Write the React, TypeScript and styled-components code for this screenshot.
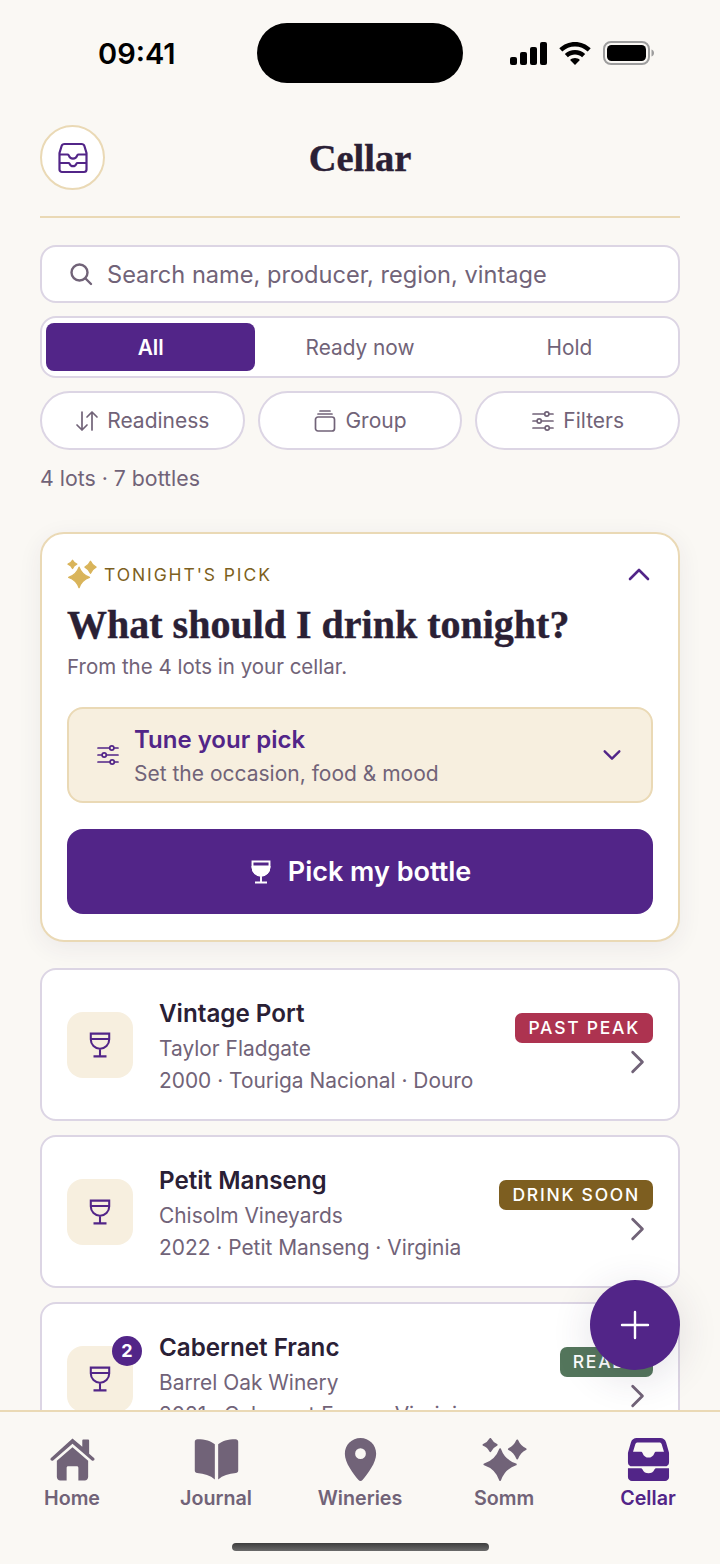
import React from 'react';
import styled, { createGlobalStyle } from 'styled-components';

const purple = '#522588';
const ink = '#2a2035';
const muted = '#716378';
const cream = '#f7efdf';
const gold = '#ead9b5';
const lilac = '#dcd5e4';
const paper = '#faf8f4';

const GlobalStyle = createGlobalStyle`
  html, body {
    margin: 0;
    padding: 0;
    background: ${paper};
  }
  * {
    box-sizing: border-box;
  }
`;

const Screen = styled.div`
  position: relative;
  width: 720px;
  height: 1564px;
  display: flex;
  flex-direction: column;
  overflow: hidden;
  background: ${paper};
  color: ${ink};
  font-family: Inter, 'Liberation Sans', sans-serif;
`;

const Scroller = styled.main`
  flex: 1;
  min-height: 0;
  overflow: hidden;
`;

const StatusBar = styled.div`
  height: 106px;
  padding: 23px 66px 0 98px;
  display: grid;
  grid-template-columns: 159px 206px 1fr;
  align-items: start;
`;

const Clock = styled.span`
  height: 60px;
  display: flex;
  align-items: center;
  font-size: 29px;
  font-weight: 600;
  color: #000;
`;

const Island = styled.div`
  height: 60px;
  border-radius: 30px;
  background: #000;
`;

const StatusIcons = styled.div`
  height: 60px;
  display: flex;
  align-items: center;
  justify-content: flex-end;
  gap: 12px;
`;

const Header = styled.header`
  margin: 0 40px;
  padding: 19px 0 26px;
  display: grid;
  grid-template-columns: 65px 1fr 65px;
  align-items: center;
  border-bottom: 2px solid ${gold};
`;

const RoundButton = styled.button`
  width: 65px;
  height: 65px;
  padding: 0;
  display: grid;
  place-items: center;
  border-radius: 50%;
  border: 2px solid ${gold};
  background: #fff;
  color: ${purple};
`;

const serif = `'Liberation Serif', 'Times New Roman', serif`;

const PageTitle = styled.h1`
  margin: 0;
  text-align: center;
  font-family: ${serif};
  font-size: 38.5px;
  line-height: 44px;
  font-weight: 700;
  -webkit-text-stroke: 0.4px ${ink};
  color: ${ink};
`;

const Controls = styled.section`
  margin: 27px 40px 0;
  display: flex;
  flex-direction: column;
  gap: 13px;
`;

const SearchBox = styled.div`
  height: 58px;
  padding: 0 27px;
  display: flex;
  align-items: center;
  gap: 14px;
  background: #fff;
  border: 2px solid ${lilac};
  border-radius: 16px;
  color: ${muted};
  font-size: 23.6px;
`;

const Segments = styled.div`
  height: 62px;
  padding: 5px 4px;
  display: grid;
  grid-template-columns: repeat(3, 1fr);
  background: #fff;
  border: 2px solid ${lilac};
  border-radius: 16px;
`;

const Segment = styled.div<{ $active?: boolean }>`
  display: grid;
  place-items: center;
  border-radius: 8px;
  font-size: 20.8px;
  font-weight: ${(p) => (p.$active ? 600 : 400)};
  color: ${(p) => (p.$active ? '#fff' : muted)};
  background: ${(p) => (p.$active ? purple : 'transparent')};
`;

const Chips = styled.div`
  display: grid;
  grid-template-columns: repeat(3, 1fr);
  gap: 13px;
`;

const Chip = styled.div`
  height: 59px;
  display: flex;
  align-items: center;
  justify-content: center;
  gap: 8px;
  background: #fff;
  border: 2px solid ${lilac};
  border-radius: 30px;
  color: ${muted};
  font-size: 21px;
`;

const Count = styled.p`
  margin: 0;
  padding-top: 1px;
  font-size: 21.3px;
  line-height: 28px;
  color: ${muted};
`;

const PickCard = styled.section`
  margin: 40px 40px 0;
  padding: 25px 25px 26px;
  background: #fff;
  border: 2px solid ${gold};
  border-radius: 24px;
  box-shadow: 0 6px 24px rgba(60, 40, 80, 0.07);
`;

const PickTop = styled.div`
  height: 30px;
  display: flex;
  align-items: center;
  gap: 7px;
  color: #7d5f20;
  font-size: 17.5px;
  letter-spacing: 1.9px;
`;

const SparkleMark = styled.span`
  display: flex;
  color: #d9b45a;
`;

const PickToggle = styled.span`
  margin-left: auto;
  margin-right: 2px;
  display: flex;
  color: ${purple};
`;

const PickTitle = styled.h2`
  margin: 14px 0 0;
  font-family: ${serif};
  font-size: 40px;
  line-height: 44px;
  font-weight: 700;
  -webkit-text-stroke: 0.4px ${ink};
  color: ${ink};
`;

const PickNote = styled.p`
  margin: 6px 0 0;
  font-size: 20.5px;
  line-height: 28px;
  color: ${muted};
`;

const TuneBox = styled.div`
  margin-top: 26px;
  height: 96px;
  padding: 0 28px 0 27px;
  display: flex;
  align-items: center;
  gap: 14px;
  background: ${cream};
  border: 2px solid ${gold};
  border-radius: 16px;
  color: ${purple};
`;

const TuneCopy = styled.div`
  flex: 1;
  padding-top: 1px;
  display: flex;
  flex-direction: column;
  gap: 4px;
`;

const TuneTitle = styled.span`
  font-size: 24px;
  line-height: 32px;
  font-weight: 600;
  color: ${purple};
`;

const TuneNote = styled.span`
  font-size: 21px;
  line-height: 28px;
  color: ${muted};
`;

const PickButton = styled.button`
  margin-top: 26px;
  width: 100%;
  height: 85px;
  display: flex;
  align-items: center;
  justify-content: center;
  gap: 15px;
  border: 0;
  border-radius: 16px;
  background: ${purple};
  color: #fff;
  font-family: inherit;
  font-size: 27px;
  font-weight: 600;
`;

const Lots = styled.div`
  margin: 26px 40px 0;
  display: flex;
  flex-direction: column;
  gap: 14px;
`;

const LotCard = styled.article`
  flex: none;
  height: 153px;
  padding: 0 25px;
  display: grid;
  grid-template-columns: 66px 1fr auto;
  column-gap: 26px;
  align-items: center;
  background: #fff;
  border: 2px solid ${lilac};
  border-radius: 16px;
`;

const Thumb = styled.div`
  position: relative;
  width: 66px;
  height: 66px;
  display: grid;
  place-items: center;
  border-radius: 16px;
  background: ${cream};
  color: ${purple};
`;

const QtyBadge = styled.span`
  position: absolute;
  top: -10px;
  right: -9px;
  width: 30px;
  height: 30px;
  display: grid;
  place-items: center;
  border-radius: 50%;
  background: ${purple};
  color: #fff;
  font-size: 18px;
  font-weight: 700;
`;

const LotCopy = styled.div`
  padding-top: 3px;
  display: flex;
  flex-direction: column;
`;

const LotName = styled.span`
  font-size: 24.2px;
  line-height: 32px;
  font-weight: 600;
  color: ${ink};
`;

const LotLine = styled.span<{ $gap: number }>`
  margin-top: ${(p) => p.$gap}px;
  font-size: 20.9px;
  line-height: 28px;
  color: ${muted};
`;

const LotSide = styled.div`
  align-self: center;
  margin-top: -2px;
  display: flex;
  flex-direction: column;
  align-items: flex-end;
  gap: 6px;
  color: ${muted};

  > svg {
    margin-right: 3px;
  }
`;

const Pill = styled.span<{ $tone: string }>`
  height: 30px;
  padding: 0 13px;
  display: flex;
  align-items: center;
  border-radius: 7px;
  background: ${(p) => p.$tone};
  color: #fff;
  font-size: 17.5px;
  font-weight: 500;
  letter-spacing: 1.75px;
  white-space: nowrap;
`;

const Fab = styled.button`
  position: absolute;
  left: 590px;
  top: 1280px;
  width: 90px;
  height: 90px;
  padding: 0;
  display: grid;
  place-items: center;
  border: 0;
  border-radius: 50%;
  background: ${purple};
  color: #fff;
  box-shadow: 0 8px 40px rgba(60, 40, 80, 0.14);
`;

const TabBar = styled.nav`
  position: relative;
  flex: none;
  height: 154px;
  padding-top: 25px;
  display: grid;
  grid-template-columns: repeat(5, 1fr);
  align-items: start;
  background: ${paper};
  border-top: 2px solid ${gold};
`;

const Tab = styled.div<{ $active?: boolean }>`
  display: flex;
  flex-direction: column;
  align-items: center;
  gap: 3px;
  font-size: 19.7px;
  line-height: 26px;
  font-weight: 600;
  color: ${(p) => (p.$active ? purple : muted)};
`;

const TabIcon = styled.svg`
  display: block;
  width: 45px;
  height: 45px;
  fill: currentColor;
`;

const HomeIndicator = styled.span`
  position: absolute;
  left: 232px;
  bottom: 13px;
  width: 257px;
  height: 8px;
  border-radius: 4px;
  background: linear-gradient(#3d3d3d, #6a6a6a);
`;

function Glass({ size = 26, tone = 'outline' }: { size?: number; tone?: 'outline' | 'solid' }) {
  return (
    <svg width={size} height={size} viewBox="0 0 24 24" fill="none" stroke="currentColor" strokeWidth="1.9">
      {tone === 'solid' && <path d="M3.500 7h17a8.500 8.500 0 0 1-17 0z" fill="currentColor" />}
      <path d="M3.500 1.500h17V7a8.500 8.500 0 0 1-17 0zM3.500 6.500h17M12 15.500v7M6 22.500h12" />
    </svg>
  );
}

function Sliders({ size = 24 }: { size?: number }) {
  return (
    <svg width={size} height={size} viewBox="0 0 24 24" fill="none" stroke="currentColor" strokeWidth="1.7" strokeLinecap="round">
      <path d="M2 5h11.500M18 5h4M2 12h4M10.500 12H22M2 19h12M18.500 19H22" />
      <circle cx="15.800" cy="5" r="2.100" />
      <circle cx="8.200" cy="12" r="2.100" />
      <circle cx="16.200" cy="19" r="2.100" />
    </svg>
  );
}

function Chevron({ dir, size = 24 }: { dir: 'up' | 'down' | 'right'; size?: number }) {
  const d = { up: 'M3 17 12 8l9 9', down: 'M4 8l8 8 8-8', right: 'M8 3l9 9-9 9' }[dir];
  return (
    <svg width={size} height={size} viewBox="0 0 24 24" fill="none" stroke="currentColor" strokeWidth="2.6" strokeLinecap="round" strokeLinejoin="round">
      <path d={d} />
    </svg>
  );
}

function Sparkles({ size = 46 }: { size?: number }) {
  return (
    <svg width={size} height={size} viewBox="0 0 46 46" fill="currentColor" stroke="currentColor" strokeWidth="2" strokeLinejoin="round">
      <path d="M18.500 12.500Q22.500 24 34.500 28 22.500 32 18.500 44 14.500 32 2.500 28 14.500 24 18.500 12.500z" />
      <path d="M8.500 2Q10.500 6 15 8 10.500 10 8.500 14.500 6.500 10 1.500 8 6.500 6 8.500 2z" />
      <path d="M36 3.500Q38.500 9.500 44.500 12.500 38.500 15.500 36 22 33.500 15.500 27.500 12.500 33.500 9.500 36 3.500z" />
    </svg>
  );
}

const Lot = ({ name, maker, meta, pill, tone, qty }: {
  name: string;
  maker: string;
  meta: string;
  pill: string;
  tone: string;
  qty?: number;
}) => (
  <LotCard>
    <Thumb>
      <Glass />
      {qty ? <QtyBadge>{qty}</QtyBadge> : null}
    </Thumb>
    <LotCopy>
      <LotName>{name}</LotName>
      <LotLine $gap={5}>{maker}</LotLine>
      <LotLine $gap={4}>{meta}</LotLine>
    </LotCopy>
    <LotSide>
      <Pill $tone={tone}>{pill}</Pill>
      <Chevron dir="right" size={26} />
    </LotSide>
  </LotCard>
);

export default function App() {
  return (
    <Screen>
      <GlobalStyle />
      <Scroller>
        <StatusBar>
          <Clock>09:41</Clock>
          <Island />
          <StatusIcons>
            <svg width="37" height="23" viewBox="0 0 37 23" fill="#000">
              <rect x="0" y="15" width="7" height="8" rx="2" />
              <rect x="10" y="10" width="7" height="13" rx="2" />
              <rect x="20" y="5" width="7" height="18" rx="2" />
              <rect x="30" y="0" width="7" height="23" rx="2" />
            </svg>
            <svg width="32" height="23" viewBox="0 0 32 23" fill="#000">
              <path d="M16 0c6 0 11.500 2.300 15.700 6.300l-3 3.200C25.300 6.400 20.900 4.500 16 4.500S6.700 6.400 3.300 9.500l-3-3.200C4.500 2.300 10 0 16 0z" />
              <path d="M16 8c3.900 0 7.500 1.500 10.200 4l-3.100 3.200C21.200 13.500 18.700 12.500 16 12.500s-5.200 1-7.100 2.700L5.800 12C8.500 9.500 12.100 8 16 8z" />
              <path d="M16 16c1.900 0 3.600.7 4.900 1.900L16 23l-4.900-5.100c1.300-1.200 3-1.900 4.900-1.900z" />
            </svg>
            <svg width="51" height="24" viewBox="0 0 51 24">
              <rect x="1" y="1" width="45" height="22" rx="7" fill="none" stroke="#9d9d9d" strokeWidth="2" />
              <rect x="4" y="4" width="39" height="16" rx="4.500" fill="#000" />
              <path d="M48.500 8.500c1.500.5 2.500 1.800 2.500 3.500s-1 3-2.500 3.500z" fill="#9d9d9d" />
            </svg>
          </StatusIcons>
        </StatusBar>

        <Header>
          <RoundButton>
            <svg width="30" height="32" viewBox="0 0 30 32" fill="none" stroke="currentColor" strokeWidth="2.200" strokeLinejoin="round">
              <path d="M6.500 2h17c1.400 0 2.500.8 2.900 2L28.500 11v16.500c0 1.400-1.100 2.500-2.500 2.500H4c-1.400 0-2.500-1.100-2.500-2.500V11l2.100-7c.4-1.200 1.500-2 2.900-2z" />
              <path d="M1.500 12.500h8c.8 0 1 .5 1.300 1 .7 2 2.300 3.200 4.200 3.200s3.500-1.200 4.200-3.200c.3-.5.5-1 1.300-1h8" />
              <path d="M1.500 21h9c.6 0 .9.400 1.100.8.6 1.500 1.800 2.400 3.400 2.400s2.800-.9 3.400-2.400c.2-.4.500-.8 1.100-.8h9" />
            </svg>
          </RoundButton>
          <PageTitle>Cellar</PageTitle>
        </Header>

        <Controls>
          <SearchBox>
            <svg width="24" height="24" viewBox="0 0 24 24" fill="none" stroke="currentColor" strokeWidth="2.400" strokeLinecap="round">
              <circle cx="10.500" cy="10.500" r="8" />
              <path d="M16.500 16.500 22 22" />
            </svg>
            Search name, producer, region, vintage
          </SearchBox>
          <Segments>
            <Segment $active>All</Segment>
            <Segment>Ready now</Segment>
            <Segment>Hold</Segment>
          </Segments>
          <Chips>
            <Chip>
              <svg width="24" height="24" viewBox="0 0 24 24" fill="none" stroke="currentColor" strokeWidth="1.700" strokeLinecap="round" strokeLinejoin="round">
                <path d="M7 3v18M2 16l5 5 5-5M17 21V3M12 8l5-5 5 5" />
              </svg>
              Readiness
            </Chip>
            <Chip>
              <svg width="24" height="24" viewBox="0 0 24 24" fill="none" stroke="currentColor" strokeWidth="1.700" strokeLinecap="round">
                <rect x="2.500" y="8" width="19" height="14" rx="2.500" />
                <path d="M5 5h14M7 2h10" />
              </svg>
              Group
            </Chip>
            <Chip>
              <Sliders />
              Filters
            </Chip>
          </Chips>
          <Count>4 lots · 7 bottles</Count>
        </Controls>

        <PickCard>
          <PickTop>
            <SparkleMark>
              <Sparkles size={30} />
            </SparkleMark>
            TONIGHT'S PICK
            <PickToggle>
              <Chevron dir="up" size={24} />
            </PickToggle>
          </PickTop>
          <PickTitle>What should I drink tonight?</PickTitle>
          <PickNote>From the 4 lots in your cellar.</PickNote>
          <TuneBox>
            <Sliders />
            <TuneCopy>
              <TuneTitle>Tune your pick</TuneTitle>
              <TuneNote>Set the occasion, food &amp; mood</TuneNote>
            </TuneCopy>
            <Chevron dir="down" size={22} />
          </TuneBox>
          <PickButton>
            <Glass size={24} tone="solid" />
            Pick my bottle
          </PickButton>
        </PickCard>

        <Lots>
          <Lot name="Vintage Port" maker="Taylor Fladgate" meta="2000 · Touriga Nacional · Douro" pill="PAST PEAK" tone="#ad3350" />
          <Lot name="Petit Manseng" maker="Chisolm Vineyards" meta="2022 · Petit Manseng · Virginia" pill="DRINK SOON" tone="#7d5e20" />
          <Lot name="Cabernet Franc" maker="Barrel Oak Winery" meta="2021 · Cabernet Franc · Virginia" pill="READY" tone="#54765c" qty={2} />
        </Lots>
      </Scroller>

      <Fab>
        <svg width="30" height="30" viewBox="0 0 30 30" fill="none" stroke="currentColor" strokeWidth="2.400" strokeLinecap="round">
          <path d="M15 2v26M2 15h26" />
        </svg>
      </Fab>

      <TabBar>
        <Tab>
          <TabIcon viewBox="0 0 46 46">
            <path d="M23 1.500 33 10V3.500c0-.6.400-1 1-1h5c.6 0 1 .4 1 1V17l5 4.500c.7.700.7 1.700.1 2.300-.6.600-1.600.7-2.300.100L23 6.800 3.200 23.900c-.7.600-1.700.5-2.300-.1-.6-.6-.6-1.600.1-2.300z" />
            <path d="M23 10.500 39 24.300V41c0 2-1.600 3.500-3.500 3.500H29V31.500c0-.8-.7-1.500-1.500-1.500h-9c-.8 0-1.500.7-1.500 1.500v13h-6.500C8.600 44.500 7 43 7 41V24.300z" />
          </TabIcon>
          Home
        </Tab>
        <Tab>
          <TabIcon viewBox="0 0 46 46">
            <path d="M21.300 7.500C17.600 4 11.500 2.300 3.500 2.200 2 2.200.8 3.300.8 4.800v29.500c0 1.400 1 2.500 2.400 2.600 7.300.5 13.500 2.500 18.100 6.600z" />
            <path d="M24.700 7.500C28.400 4 34.500 2.300 42.500 2.200c1.500 0 2.700 1.100 2.700 2.600v29.500c0 1.400-1 2.500-2.400 2.600-7.300.5-13.500 2.500-18.100 6.600z" />
          </TabIcon>
          Journal
        </Tab>
        <Tab>
          <TabIcon viewBox="0 0 46 46">
            <path fillRule="evenodd" d="M23 1c8.800 0 16 7 16 16 0 9.500-8.500 20-14 27-1 1.200-3 1.200-4 0C15.500 37 7 26.500 7 17 7 8 14.200 1 23 1zm0 10.500a5.500 5.500 0 1 0 0 11 5.500 5.500 0 0 0 0-11z" />
          </TabIcon>
          Wineries
        </Tab>
        <Tab>
          <Sparkles size={45} />
          Somm
        </Tab>
        <Tab $active>
          <TabIcon viewBox="0 0 46 46">
            <path fillRule="evenodd" d="M11 1h24c3 0 5.200 1.800 6 4.500L44 16v10c0 2.500-2 4-4 4H6c-2 0-4-1.500-4-4V16L5 5.500C5.800 2.800 8 1 11 1zm1 4.500c-1.200 0-2.100.7-2.500 1.800L7.200 15H15c1 0 1.500.5 2 1.500 1 3 3.500 4.500 6 4.500s5-1.500 6-4.500c.5-1 1-1.500 2-1.500h7.800l-2.300-7.700c-.4-1.100-1.300-1.800-2.500-1.800z" />
            <path d="M2 32h13c1 0 1.600.6 2 1.500 1 2.500 3.300 3.500 6 3.500s5-1 6-3.500c.4-.9 1-1.500 2-1.500h13v9c0 2.500-2 4-4 4H6c-2 0-4-1.500-4-4z" />
          </TabIcon>
          Cellar
        </Tab>
        <HomeIndicator />
      </TabBar>
    </Screen>
  );
}
